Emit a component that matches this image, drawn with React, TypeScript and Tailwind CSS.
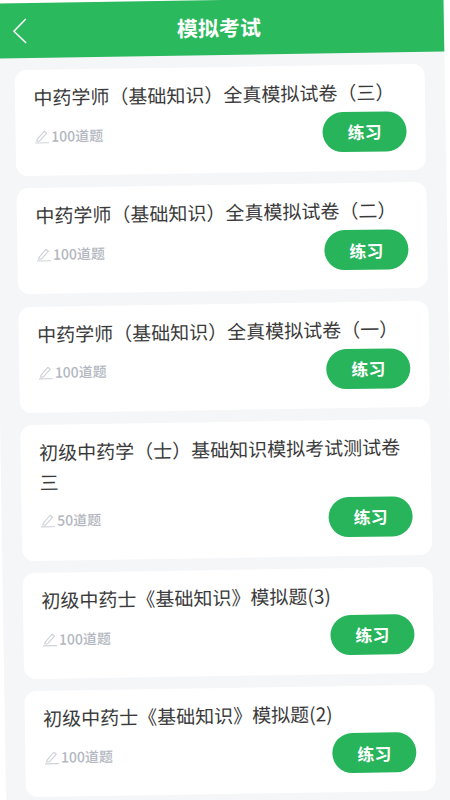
const papers = [
  { title: "中药学师（基础知识）全真模拟试卷（三）", count: 100 },
  { title: "中药学师（基础知识）全真模拟试卷（二）", count: 100 },
  { title: "中药学师（基础知识）全真模拟试卷（一）", count: 100 },
  { title: "初级中药学（士）基础知识模拟考试测试卷三", count: 50 },
  { title: "初级中药士《基础知识》模拟题(3)", count: 100 },
  { title: "初级中药士《基础知识》模拟题(2)", count: 100 },
];

const PenIcon = () => (
  <svg viewBox="0 0 15 15" className="h-[15px] w-[15px] shrink-0 text-[#cdd0d6]" fill="none" stroke="currentColor" strokeWidth={1.1}>
    <path d="M2.5 10.5 L9.5 2.5 L12 4.5 L5 12 L2.2 12.2 Z" strokeLinejoin="round" />
    <path d="M1 14 H14" strokeLinecap="round" />
  </svg>
);

const PaperCard = ({ title, count }: { title: string; count: number }) => (
  <div className="rounded-xl bg-white pb-[19px] pl-[19px] pr-[19px] pt-[12px]">
    <h2 className="text-[19px] font-normal leading-[30px] text-[#3a3a3a]">{title}</h2>
    <div className="mt-[5px] flex items-center justify-between">
      <div className="flex items-center gap-[2px] pb-[2px] text-[14px] font-medium text-[#b3b7c0]">
        <PenIcon />
        {count}道题
      </div>
      <button className="flex h-[40px] w-[84px] items-center justify-center rounded-full bg-[#27b45a] text-[17px] font-bold text-white">
        练习
      </button>
    </div>
  </div>
);

export default function App() {
  return (
    <div className="h-[800px] w-[450px] overflow-hidden bg-white font-['Noto_Sans_CJK_SC','Noto_Sans',sans-serif]">
      <div className="h-[830px] w-[450px] rotate-[-0.9deg] bg-[#f5f6f8]">
        <header className="relative flex h-[55px] items-center justify-center bg-[#2bb95e] text-white">
          <svg viewBox="0 0 15 26" className="absolute left-[18px] top-[15px] h-[26px] w-[15px]" fill="none" stroke="currentColor" strokeWidth={1.5}>
            <path d="M14 1 L2 13 L14 25" />
          </svg>
          <h1 className="text-[21px] font-bold">模拟考试</h1>
        </header>
        <div className="flex flex-col gap-[12.3px] pl-[19.5px] pr-[20px] pt-[12px]">
          {papers.map((p) => (
            <PaperCard key={p.title} title={p.title} count={p.count} />
          ))}
        </div>
      </div>
    </div>
  );
}
